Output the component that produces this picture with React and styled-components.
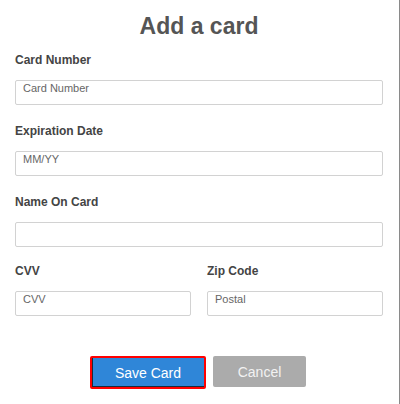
import React from "react";
import styled, { createGlobalStyle } from "styled-components";

const Global = createGlobalStyle`
  html, body { margin: 0; padding: 0; background: #fff; }
  body { font-family: "Liberation Sans", Arial, sans-serif; }
  * { box-sizing: border-box; }
`;

const Panel = styled.div`
  width: 400px;
  height: 404px;
  padding: 13px 16px 0 15px;
  border-right: 1px solid #8a8a8a;
  background: #fff;
`;

const Title = styled.h1`
  margin: 0;
  font-size: 23px;
  line-height: 26px;
  font-weight: 700;
  color: #555;
  text-align: center;
`;

const Field = styled.div`
  display: flex;
  flex-direction: column;
  margin-top: ${(p) => p.$gap || "19px"};
`;

const Label = styled.label`
  font-size: 12px;
  line-height: 14px;
  font-weight: 700;
  color: #444;
  margin-bottom: 13px;
`;

const Input = styled.input`
  width: 100%;
  height: 25px;
  margin: 0;
  padding: 1px 7px 10px;
  border: 1px solid #d2d2d2;
  border-radius: 2px;
  font-family: "Liberation Sans", Arial, sans-serif;
  font-size: 11px;
  color: #333;
  background: #fff;
  outline: none;
  &::placeholder { color: #666; }
`;

const Row = styled.div`
  display: grid;
  grid-template-columns: 1fr 1fr;
  column-gap: 16px;
`;

const Buttons = styled.div`
  display: flex;
  justify-content: center;
  align-items: flex-start;
  gap: 7px;
  margin-top: 40px;
  padding-right: 2px;
`;

const Button = styled.button`
  height: ${(p) => (p.$primary ? "33px" : "31px")};
  width: ${(p) => (p.$primary ? "116px" : "93px")};
  padding: 0;
  border-radius: 2px;
  font-family: "Liberation Sans", Arial, sans-serif;
  font-size: 14px;
  color: ${(p) => (p.$primary ? "#fff" : "#f2f2f2")};
  background: ${(p) => (p.$primary ? "#2f86d8" : "#ababab")};
  border: ${(p) => (p.$primary ? "2px solid #ff0000" : "none")};
  box-shadow: ${(p) => (p.$primary ? "inset 1px -1px 0 #1d2a38" : "none")};
  cursor: pointer;
`;

export default function App() {
  return (
    <>
      <Global />
      <Panel>
        <Title>Add a card</Title>
        <Field $gap="14px">
          <Label>Card Number</Label>
          <Input placeholder="Card Number" />
        </Field>
        <Field>
          <Label>Expiration Date</Label>
          <Input placeholder="MM/YY" />
        </Field>
        <Field>
          <Label>Name On Card</Label>
          <Input />
        </Field>
        <Row>
          <Field $gap="17px">
            <Label>CVV</Label>
            <Input placeholder="CVV" />
          </Field>
          <Field $gap="17px">
            <Label>Zip Code</Label>
            <Input placeholder="Postal" />
          </Field>
        </Row>
        <Buttons>
          <Button $primary>Save Card</Button>
          <Button>Cancel</Button>
        </Buttons>
      </Panel>
    </>
  );
}
